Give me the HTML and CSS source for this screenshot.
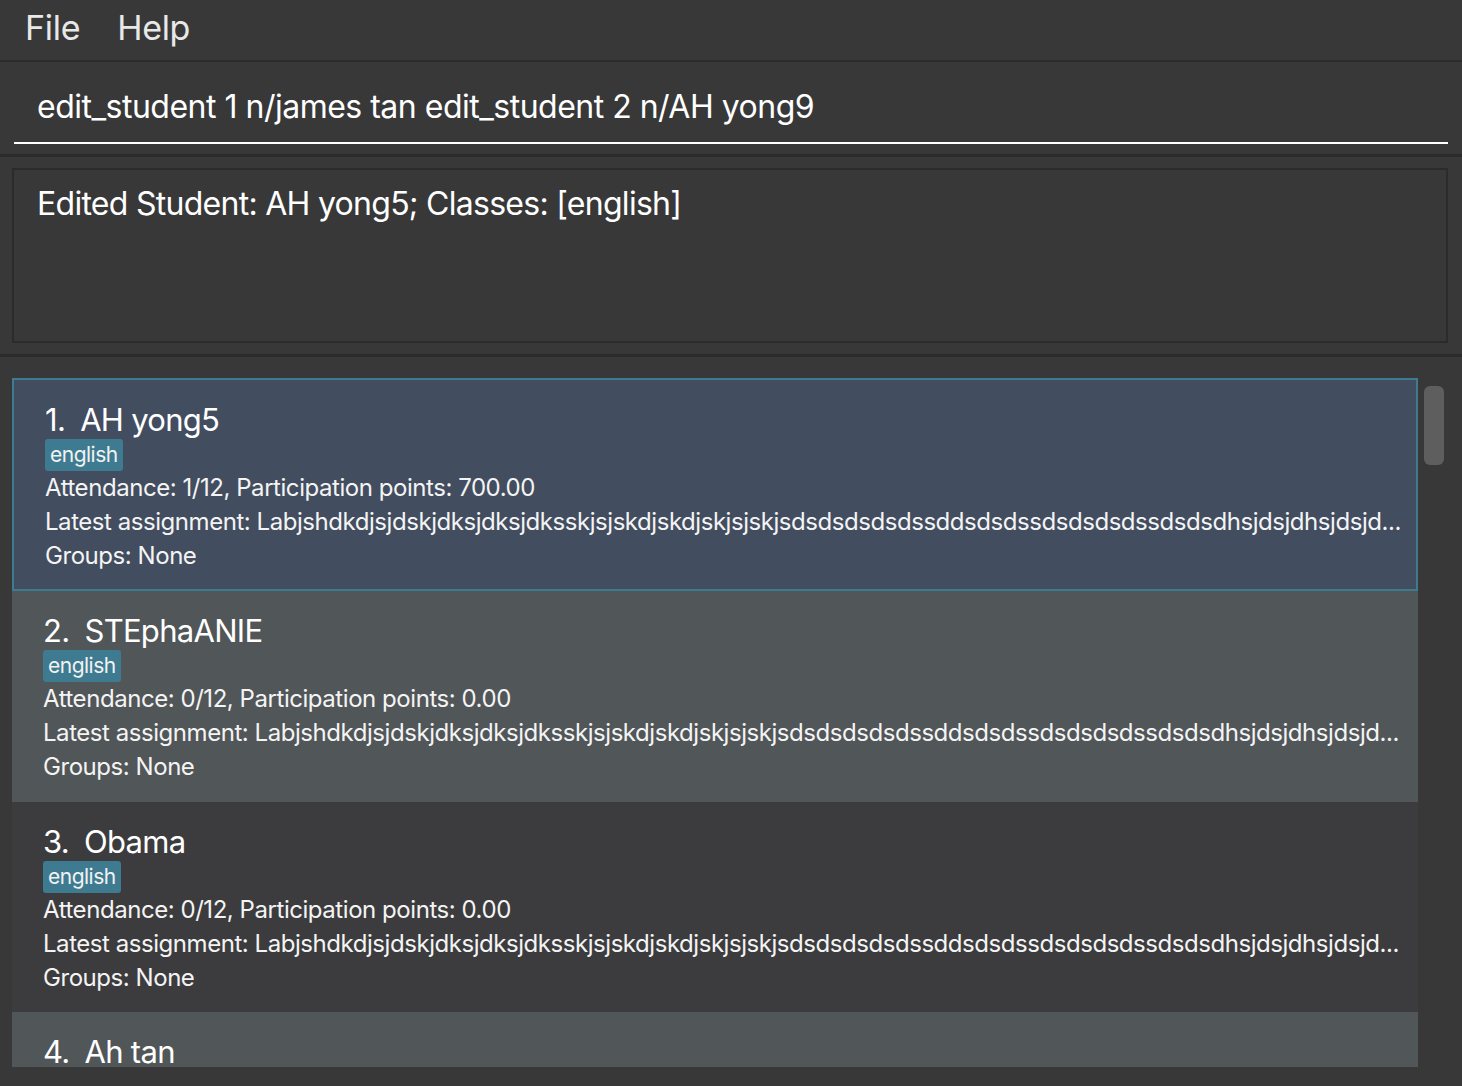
FILE: index.html
```html
<!DOCTYPE html>
<html>
<head>
<meta charset="utf-8">
<link rel="stylesheet" href="styles.css">
</head>
<body>
<div class="app">
  <div class="menubar">
    <span class="menu-item">File</span>
    <span class="menu-item">Help</span>
  </div>
  <div class="command">
    <div class="cmd-input">edit_student 1 n/james tan edit_student 2 n/AH yong9</div>
  </div>
  <div class="result">
    <div class="result-box">Edited Student: AH yong5; Classes: [english]</div>
  </div>
  <div class="list-pane">
    <div class="list">
      <div class="card selected">
        <div class="title"><span class="idx">1.</span><span>AH yong5</span></div>
        <div class="tags"><span class="tag">english</span></div>
        <div class="line">Attendance: 1/12, Participation points: 700.00</div>
        <div class="line">Latest assignment: Labjshdkdjsjdskjdksjdksjdksskjsjskdjskdjskjsjskjsdsdsdsdsdssddsdsdssdsdsdsdssdsdsdhsjdsjdhsjdsjd...</div>
        <div class="line">Groups: None</div>
      </div>
      <div class="card even">
        <div class="title"><span class="idx">2.</span><span>STEphaANIE</span></div>
        <div class="tags"><span class="tag">english</span></div>
        <div class="line">Attendance: 0/12, Participation points: 0.00</div>
        <div class="line">Latest assignment: Labjshdkdjsjdskjdksjdksjdksskjsjskdjskdjskjsjskjsdsdsdsdsdssddsdsdssdsdsdsdssdsdsdhsjdsjdhsjdsjd...</div>
        <div class="line">Groups: None</div>
      </div>
      <div class="card odd">
        <div class="title"><span class="idx">3.</span><span>Obama</span></div>
        <div class="tags"><span class="tag">english</span></div>
        <div class="line">Attendance: 0/12, Participation points: 0.00</div>
        <div class="line">Latest assignment: Labjshdkdjsjdskjdksjdksjdksskjsjskdjskdjskjsjskjsdsdsdsdsdssddsdsdssdsdsdsdssdsdsdhsjdsjdhsjdsjd...</div>
        <div class="line">Groups: None</div>
      </div>
      <div class="card even">
        <div class="title"><span class="idx">4.</span><span>Ah tan</span></div>
      </div>
    </div>
    <div class="scrollbar"><div class="thumb"></div></div>
  </div>
</div>
</body>
</html>
```

FILE: styles.css
```css
html, body {
  margin: 0;
  padding: 0;
  background: #383838;
}
body {
  font-family: "Inter", "Liberation Sans", sans-serif;
  color: #ffffff;
  width: 1462px;
  height: 1086px;
  overflow: hidden;
}
.app {
  display: flex;
  flex-direction: column;
  height: 1086px;
}
.menubar {
  height: 62px;
  box-sizing: border-box;
  border-bottom: 2px solid #2b2b2b;
  display: flex;
  align-items: center;
  gap: 37px;
  padding: 0 0 6px 25px;
  font-size: 34px;
  letter-spacing: -0.3px;
  color: #e8e8e8;
}
.command {
  padding: 0 14px 10px 14px;
  border-bottom: 3px solid #2b2b2b;
  box-sizing: border-box;
  height: 95px;
}
.cmd-input {
  height: 82px;
  box-sizing: border-box;
  border-bottom: 2px solid #ffffff;
  padding: 27px 0 0 23px;
  font-size: 32px;
  line-height: 36px;
  letter-spacing: -0.5px;
  white-space: nowrap;
}
.result {
  height: 200px;
  box-sizing: border-box;
  padding: 11px 14px 11px 12px;
  border-bottom: 3px solid #2b2b2b;
}
.result-box {
  height: 175px;
  box-sizing: border-box;
  border: 2px solid #2b2b2b;
  padding: 16px 0 0 23px;
  font-size: 32px;
  line-height: 36px;
  letter-spacing: -0.72px;
}
.list-pane {
  flex: 1;
  display: flex;
  padding: 21px 0 0 12px;
  gap: 6px;
}
.list {
  width: 1406px;
  height: 689px;
  overflow: hidden;
  display: flex;
  flex-direction: column;
}
.card {
  flex: none;
  height: 211px;
  box-sizing: border-box;
  padding: 25px 8px 16px 31px;
}
.card.selected {
  height: 213px;
  background: #424d5f;
  border: 2px solid #3e7b91;
  padding: 25px 6px 14px 31px;
}
.card.even {
  background: #515658;
}
.card.odd {
  height: 210px;
  background: #3c3c3e;
}
.title {
  font-size: 31px;
  line-height: 30px;
  letter-spacing: -0.7px;
  display: flex;
  gap: 15px;
  white-space: nowrap;
}
.tags {
  margin-top: 4px;
  height: 32px;
  display: flex;
}
.tag {
  background: #3e7b91;
  border-radius: 3px;
  padding: 0 5px;
  font-size: 21px;
  line-height: 32px;
  letter-spacing: -0.5px;
  color: #f2f2f2;
}
.line {
  font-size: 24px;
  line-height: 34px;
  letter-spacing: -0.45px;
  white-space: nowrap;
  overflow: hidden;
  color: #f4f4f4;
}
.scrollbar {
  width: 20px;
  padding-top: 8px;
}
.thumb {
  width: 20px;
  height: 79px;
  background: #5e5e5e;
  border-radius: 6px;
}
```
